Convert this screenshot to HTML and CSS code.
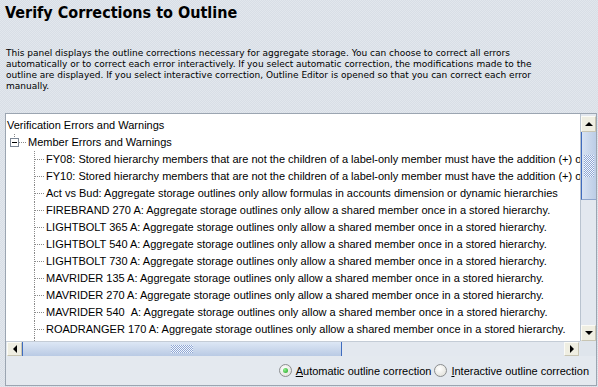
FILE: index.html
```html
<!DOCTYPE html>
<html lang="en">
<head>
    <meta charset="UTF-8">
    <title>Verify Corrections to Outline</title>
    <link rel="stylesheet" href="styles.css">
</head>
<body>
    <h1 class="title">Verify Corrections to Outline</h1>

    <p class="intro">
        This panel displays the outline corrections necessary for aggregate storage. You can choose to correct all errors<br>
        automatically or to correct each error interactively. If you select automatic correction, the modifications made to the<br>
        outline are displayed. If you select interactive correction, Outline Editor is opened so that you can correct each error<br>
        manually.
    </p>

    <div class="panel">
        <div class="scroll">
            <div class="view">
                <div class="node root">Verification Errors and Warnings</div>
                <div class="node branch">
                    <span class="handle"><i class="stem"></i><span class="toggle"></span><i class="gap"></i></span>
                    <span class="stub"></span>
                    <span class="label">Member Errors and Warnings</span>
                </div>
                <div class="node leaf"><span class="elbow"></span>FY08: Stored hierarchy members that are not the children of a label-only member must have the addition (+) operator</div>
                <div class="node leaf"><span class="elbow"></span>FY10: Stored hierarchy members that are not the children of a label-only member must have the addition (+) operator</div>
                <div class="node leaf"><span class="elbow"></span>Act vs Bud: Aggregate storage outlines only allow formulas in accounts dimension or dynamic hierarchies</div>
                <div class="node leaf"><span class="elbow"></span>FIREBRAND 270 A: Aggregate storage outlines only allow a shared member once in a stored hierarchy.</div>
                <div class="node leaf"><span class="elbow"></span>LIGHTBOLT 365 A: Aggregate storage outlines only allow a shared member once in a stored hierarchy.</div>
                <div class="node leaf"><span class="elbow"></span>LIGHTBOLT 540 A: Aggregate storage outlines only allow a shared member once in a stored hierarchy.</div>
                <div class="node leaf"><span class="elbow"></span>LIGHTBOLT 730 A: Aggregate storage outlines only allow a shared member once in a stored hierarchy.</div>
                <div class="node leaf"><span class="elbow"></span>MAVRIDER 135 A: Aggregate storage outlines only allow a shared member once in a stored hierarchy.</div>
                <div class="node leaf"><span class="elbow"></span>MAVRIDER 270 A: Aggregate storage outlines only allow a shared member once in a stored hierarchy.</div>
                <div class="node leaf"><span class="elbow"></span>MAVRIDER 540 &nbsp;A: Aggregate storage outlines only allow a shared member once in a stored hierarchy.</div>
                <div class="node leaf"><span class="elbow"></span>ROADRANGER 170 A: Aggregate storage outlines only allow a shared member once in a stored hierarchy.</div>
                <div class="node leaf"><span class="elbow"></span>ROADRANGER 540 A: Aggregate storage outlines only allow a shared member once in a stored hierarchy.</div>
            </div>

            <div class="vbar">
                <span class="btn up"></span>
                <span class="track"><span class="thumb"><i class="grip"></i></span></span>
                <span class="btn down"></span>
            </div>

            <div class="hbar">
                <span class="btn left"></span>
                <span class="thumb"><i class="grip"></i></span>
                <span class="track"></span>
                <span class="btn right"></span>
            </div>

            <div class="corner"></div>
        </div>

        <div class="options">
            <label class="choice"><span class="radio checked"></span><u>A</u>utomatic outline correction</label>
            <label class="choice"><span class="radio"></span><u>I</u>nteractive outline correction</label>
        </div>
    </div>
</body>
</html>
```

FILE: styles.css
```css
body {
    margin: 0;
    width: 598px;
    height: 387px;
    overflow: hidden;
    color: #000;
    font-family: "Liberation Sans", Arial, sans-serif;
    background-color: #dde3ea;
    background-image: repeating-conic-gradient(#d8dee6 0 25%, #e2e7ed 0 50%);
    background-size: 2px 2px;
}

.title {
    margin: 3px 0 0 5px;
    font: bold 16px/20px "DejaVu Sans Condensed", "DejaVu Sans", sans-serif;
    font-stretch: condensed;
}

.intro {
    margin: 25px 0 0 6px;
    font: 9px/11px "DejaVu Sans", sans-serif;
    white-space: nowrap;
}

/* outer box: tree + radio row */
.panel {
    margin: 21px 1px 0 5px;
    height: 271px;
    border: 1px solid #9ba5b1;
    display: flex;
    flex-direction: column;
}

.scroll {
    flex: 1;
    min-height: 0;
    display: grid;
    grid-template-columns: 1fr 16px;
    grid-template-rows: 1fr 15px;
    background: #fff;
}

/* tree */
.view {
    overflow: hidden;
    padding-top: 3px;
    font-size: 11px;
    line-height: 17px;
    white-space: nowrap;
}
.node {
    display: flex;
    align-items: center;
    height: 17px;
}
.root {
    padding-left: 1px;
}
.branch {
    padding-left: 4px;
}
.handle {
    align-self: stretch;
    width: 9px;
    display: flex;
    flex-direction: column;
    align-items: center;
}
.stem,
.gap {
    flex: 1;
    width: 1px;
}
.stem {
    background: linear-gradient(#8a8a8a 50%, transparent 0) 0 0 / 1px 2px repeat-y;
}
.toggle {
    width: 9px;
    height: 9px;
    box-sizing: border-box;
    border: 1px solid #7a8594;
    background: #fff;
    display: flex;
    align-items: center;
    justify-content: center;
    flex: none;
}
.toggle::before {
    content: "";
    width: 5px;
    height: 1px;
    background: #000;
}
.stub {
    width: 8px;
    height: 1px;
    margin-right: 1px;
    flex: none;
    background: linear-gradient(to right, #8a8a8a 50%, transparent 0) 0 0 / 2px 1px repeat-x;
}
.leaf {
    padding-left: 28px;
}
.elbow {
    align-self: stretch;
    width: 11px;
    margin-right: 1px;
    flex: none;
    background:
        linear-gradient(to right, #8a8a8a 50%, transparent 0) 1px 8px / 2px 1px repeat-x,
        linear-gradient(#8a8a8a 50%, transparent 0) 0 0 / 1px 2px repeat-y;
}

/* scrollbars */
.vbar {
    display: flex;
    flex-direction: column;
    padding-top: 2px;
    background: #e3e8ef;
    border-left: 1px solid #b9c3cf;
}
.hbar {
    display: flex;
    padding: 0 1px 0 1px;
    background: #e3e8ef;
    border-top: 1px solid #c4ccd6;
}
.corner {
    background: #dfe5ec;
}
.btn {
    flex: none;
    box-sizing: border-box;
    display: flex;
    align-items: center;
    justify-content: center;
    background: #efeee2;
    border: 1px solid;
    border-color: #fbfbf6 #c8c5b3 #c8c5b3 #fbfbf6;
}
.vbar .btn {
    height: 16px;
}
.hbar .btn {
    width: 15px;
}
.btn::before {
    content: "";
    border: 4px solid transparent;
}
.up::before {
    border-bottom: 4px solid #000;
    border-top-width: 0;
    margin-top: -1px;
}
.down::before {
    border-top: 4px solid #000;
    border-bottom-width: 0;
}
.left::before {
    border-right: 4px solid #000;
    border-left-width: 0;
}
.right::before {
    border-left: 4px solid #000;
    border-right-width: 0;
}
.vbar .track {
    flex: 1;
}
.vbar .thumb {
    height: 68px;
    box-sizing: border-box;
    display: flex;
    align-items: center;
    justify-content: center;
    border-left: 1px solid #3f6cbf;
    border-bottom: 1px solid #8fa6cc;
    background: linear-gradient(to right, #d7e2f2, #bccde6);
}
.vbar .grip {
    width: 10px;
    height: 22px;
    background: repeating-conic-gradient(#f4f8fd 0 25%, #8ea6d4 0 50%) 0 0 / 2px 2px;
}
.hbar .thumb {
    width: 320px;
    flex: none;
    box-sizing: border-box;
    display: flex;
    align-items: center;
    justify-content: center;
    border-left: 1px solid #3f6cbf;
    border-right: 1px solid #3f6cbf;
    background: linear-gradient(#dde7f5, #b9cae4);
}
.hbar .grip {
    width: 22px;
    height: 8px;
    background: repeating-conic-gradient(#f4f8fd 0 25%, #8ea6d4 0 50%) 0 0 / 2px 2px;
}
.hbar .track {
    flex: 1;
}

/* radio row */
.options {
    height: 29px;
    flex: none;
    display: flex;
    align-items: center;
    justify-content: flex-end;
    gap: 3px;
    padding-right: 7px;
    background: #e4e9ef;
    font-size: 11px;
}
.choice {
    display: flex;
    align-items: center;
}
.radio {
    width: 13px;
    height: 13px;
    box-sizing: border-box;
    margin-right: 4px;
    border: 1px solid #8b8d8f;
    border-radius: 50%;
    background: radial-gradient(circle at 40% 35%, #ffffff, #dcdcd4);
    display: flex;
    align-items: center;
    justify-content: center;
}
.checked::before {
    content: "";
    width: 5px;
    height: 5px;
    border-radius: 50%;
    background: radial-gradient(circle at 35% 35%, #8ef08e, #21a121);
}
```
